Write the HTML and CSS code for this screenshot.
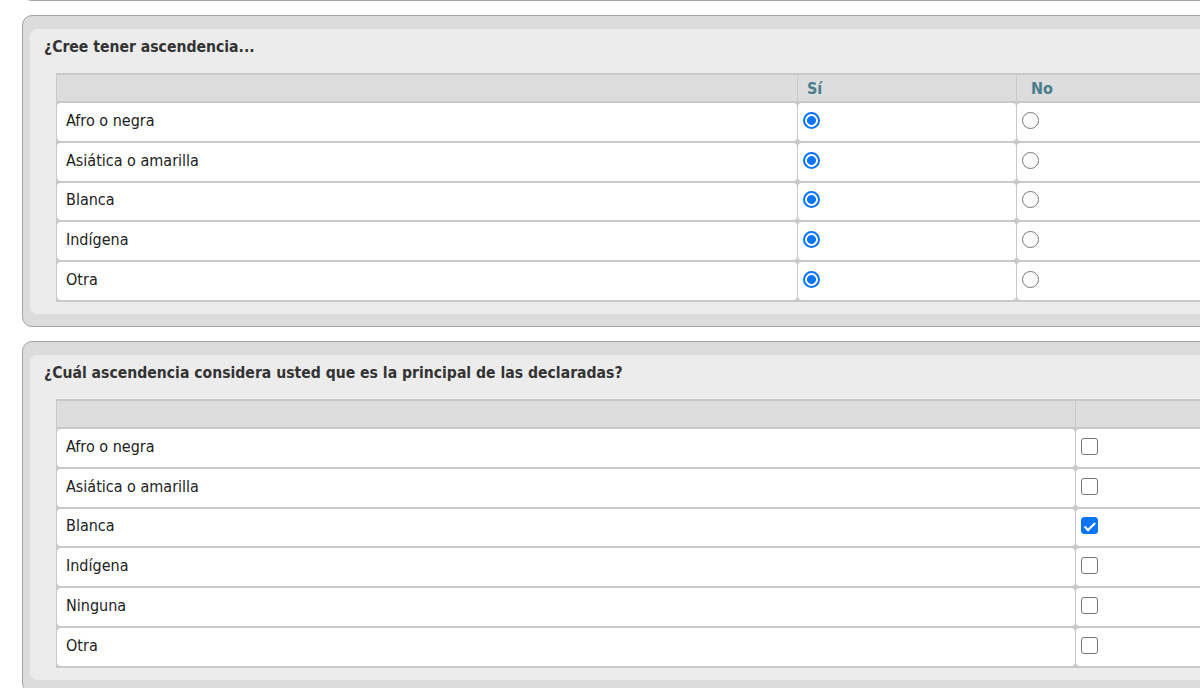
FILE: index.html
```html
<!DOCTYPE html>
<html lang="es">
<head>
<meta charset="utf-8">
<title>Ascendencia</title>
<link rel="stylesheet" href="styles.css">
</head>
<body>
<div class="page">
  <div class="panel prev"></div>

  <section class="panel">
    <div class="inner">
      <h2 class="title">¿Cree tener ascendencia...</h2>
      <table class="grid grid-1">
        <thead>
          <tr><th class="c-label"></th><th class="c-opt">Sí</th><th class="c-opt c-no">No</th></tr>
        </thead>
        <tbody>
          <tr><td>Afro o negra</td><td class="ctl"><input class="radio" type="radio" name="r1" checked></td><td class="ctl"><input class="radio" type="radio" name="r1"></td></tr>
          <tr><td>Asiática o amarilla</td><td class="ctl"><input class="radio" type="radio" name="r2" checked></td><td class="ctl"><input class="radio" type="radio" name="r2"></td></tr>
          <tr><td>Blanca</td><td class="ctl"><input class="radio" type="radio" name="r3" checked></td><td class="ctl"><input class="radio" type="radio" name="r3"></td></tr>
          <tr><td>Indígena</td><td class="ctl"><input class="radio" type="radio" name="r4" checked></td><td class="ctl"><input class="radio" type="radio" name="r4"></td></tr>
          <tr><td>Otra</td><td class="ctl"><input class="radio" type="radio" name="r5" checked></td><td class="ctl"><input class="radio" type="radio" name="r5"></td></tr>
        </tbody>
      </table>
    </div>
  </section>

  <section class="panel">
    <div class="inner">
      <h2 class="title">¿Cuál ascendencia considera usted que es la principal de las declaradas?</h2>
      <table class="grid grid-2">
        <thead>
          <tr><th class="c-label2"></th><th class="c-chk"></th></tr>
        </thead>
        <tbody>
          <tr><td>Afro o negra</td><td class="ctl"><input class="check" type="checkbox"></td></tr>
          <tr><td>Asiática o amarilla</td><td class="ctl"><input class="check" type="checkbox"></td></tr>
          <tr><td>Blanca</td><td class="ctl"><input class="check" type="checkbox" checked></td></tr>
          <tr><td>Indígena</td><td class="ctl"><input class="check" type="checkbox"></td></tr>
          <tr><td>Ninguna</td><td class="ctl"><input class="check" type="checkbox"></td></tr>
          <tr><td>Otra</td><td class="ctl"><input class="check" type="checkbox"></td></tr>
        </tbody>
      </table>
    </div>
  </section>
</div>
</body>
</html>
```
FILE: styles.css
```css
html, body {
  margin: 0;
  padding: 0;
  overflow: hidden;
  background: #ffffff;
}

body {
  font-family: "DejaVu Sans Condensed", "DejaVu Sans", sans-serif;
  color: #222222;
}

.page {
  padding-left: 22px;
  width: 1260px;
}

.panel {
  border: 1px solid #a4a4a4;
  border-radius: 10px;
  background: #dcdcdc;
  padding: 13px 7px 12px 7px;
  margin-bottom: 14px;
}

.panel.prev {
  height: 29px;
  margin-top: -29px;
  padding: 0;
  border-top: none;
}

.inner {
  background: #ececec;
  border-radius: 7px;
  padding: 8px 14px 12px 14px;
}

.title {
  margin: 0 0 16px 0;
  font-size: 15.6px;
  line-height: 20px;
  font-weight: bold;
  color: #333333;
}

.grid {
  margin-left: 12px;
  border-collapse: separate;
  border-spacing: 1px 2px;
  background: #c9c9c9;
  font-size: 16px;
  table-layout: fixed;
  width: 1180px;
}

.grid th {
  background: #dddddd;
  height: 26px;
  padding: 0 9px;
  text-align: left;
  font-weight: bold;
  color: #4b7c8b;
  vertical-align: middle;
}

.grid th.c-no {
  padding-left: 14px;
}

.grid td {
  background: #ffffff;
  height: 34.8px;
  padding: 0 9px 3px 9px;
  vertical-align: middle;
  border-radius: 4px;
  white-space: nowrap;
}

.grid td.ctl {
  padding: 0 4px 3px 4px;
}

.c-label { width: 722px; }
.c-opt { width: 200px; }
.c-label2 { width: 1000px; }
.c-chk { width: 141px; }

.radio,
.check {
  appearance: none;
  -webkit-appearance: none;
  box-sizing: border-box;
  display: block;
  width: 17px;
  height: 17px;
  margin: 0 0 0 1px;
  background: #ffffff;
  border: 1.5px solid #767676;
}

.radio {
  border-radius: 50%;
}

.radio:checked {
  border: 2px solid #0b75f5;
  background: radial-gradient(circle, #0b75f5 0, #0b75f5 4.1px, #ffffff 4.7px);
}

.check {
  position: relative;
  border-radius: 3px;
}

.check:checked {
  background: #0b75f5;
  border-color: #0b75f5;
}

.check:checked::after {
  content: "";
  position: absolute;
  left: 4.6px;
  top: 1.2px;
  width: 4px;
  height: 8.5px;
  border-right: 2.6px solid #ffffff;
  border-bottom: 2.6px solid #ffffff;
  transform: rotate(45deg);
}
```
